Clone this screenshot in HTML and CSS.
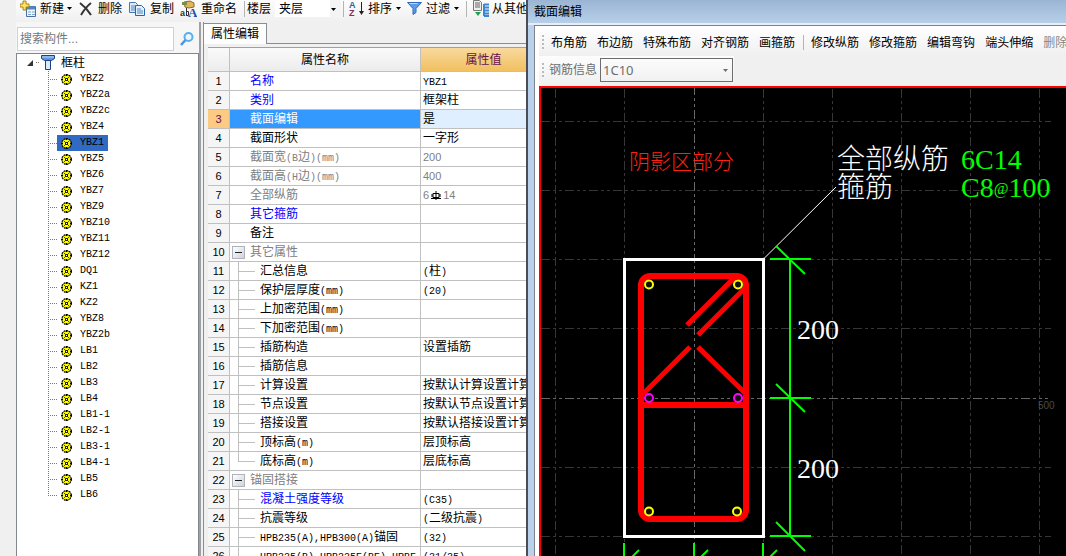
FILE: index.html
```html
<!DOCTYPE html>
<html lang="zh-CN">
<head>
<meta charset="utf-8">
<title>截面编辑</title>
<link rel="stylesheet" href="styles.css">
</head>
<body>
<svg class="defs" aria-hidden="true">
  <symbol id="gear" viewBox="0 0 11 11">
    <circle cx="5.5" cy="5.5" r="4.9" fill="#444" stroke="#000" stroke-width="1.1" stroke-dasharray="1.6 1.2"/>
    <circle cx="5.5" cy="5.5" r="4" fill="#ff0"/>
    <path d="M5.500 0v2M5.500 9v2M0 5.500h2M9 5.500h2" stroke="#000"/>
    <path d="M3 3l1 1M8 3L7 4M3 8l1-1M8 8L7 7" stroke="#444" stroke-width="1"/>
    <rect x="4.500" y="4.500" width="2" height="2" fill="#fff" stroke="#222" stroke-width="1"/>
  </symbol>
  <symbol id="caret" viewBox="0 0 5 3"><path d="M0 0h5L2.5 3z" fill="currentColor"/></symbol>
</svg>
<div class="app">
  <main class="main">
    <div class="toolbar" role="toolbar" aria-label="构件">
      <button class="tool new"><svg width="17" height="18" viewBox="0 0 17 18"><path d="M6.500 6.500h9v10h-9z" fill="#eef5fc" stroke="#4a7099"/><path d="M7 8h8" stroke="#4f86c6" stroke-width="3"/><path d="M8 12h3M12 12h3M8 14.500h3M12 14.500h3" stroke="#7aa5d6"/><path d="M3 1h3v3h3v3H6v3H3V7H0V4h3z" fill="#ffe45c" stroke="#a8841c"/></svg><span>新建</span><svg class="caret" width="5" height="3"><use href="#caret"/></svg></button>
      <button class="tool del"><svg width="14" height="14" viewBox="0 0 14 14"><path d="M1 1c4 3 8 7 11 12M12 1C8 4 5 8 2 13" fill="none" stroke="#333" stroke-width="2"/></svg><span>删除</span></button>
      <button class="tool copy"><svg width="16" height="14" viewBox="0 0 16 14"><path d="M.5.500h6l2 2v8h-8z" fill="#dcebfa" stroke="#4878b0"/><path d="M2 4h4M2 6h4M2 8h4" stroke="#4f86c6"/><path d="M6.500 3.500h6l3 3v7h-9z" fill="#e5f1fd" stroke="#2f62a8"/><path d="M8 7h4M8 9h6M8 11h6" stroke="#4f86c6"/></svg><span>复制</span></button>
      <button class="tool ren"><svg width="17" height="18" viewBox="0 0 17 18"><path d="M4 2l6-1 4 2v4l-5 1-4-1z" fill="#e1b65b" stroke="#8c6a2b"/><path d="M2 2h5v3H2z" fill="#7c8e4a"/><text x="0" y="16" class="ico-ab">a</text><path d="M6.500 8v8M6.500 11.500h2v4h-2" fill="none" stroke="#333"/><text x="8" y="17" class="ico-a">A</text></svg><span>重命名</span></button>
      <i class="sep"></i>
      <label class="floor-label" for="floor">楼层</label>
      <span class="pick floor"><select id="floor"><option>夹层</option></select><svg class="pick-arrow" width="5" height="3"><use href="#caret"/></svg></span>
      <i class="sep"></i>
      <button class="tool sort"><svg width="15" height="16" viewBox="0 0 15 16"><text x="0" y="7" class="ico-s blue">A</text><text x="0" y="15" class="ico-s red">Z</text><path d="M12.500 1v12" stroke="#222"/><path d="M10 10h5l-2.500 4z" fill="#222"/></svg><span>排序</span><svg class="caret" width="5" height="3"><use href="#caret"/></svg></button>
      <button class="tool filter"><svg width="15" height="13" viewBox="0 0 15 13"><path d="M.5.500h14L9 6.500v4L6 12.500v-6z" fill="#5c9bea" stroke="#2e68bd"/><path d="M2.500 1.500h8" stroke="#b9d7fb"/></svg><span>过滤</span><svg class="caret" width="5" height="3"><use href="#caret"/></svg></button>
      <i class="sep"></i>
      <button class="tool from"><svg width="17" height="17" viewBox="0 0 17 17"><path d="M1.500.500h6l2 2v8h-8z" fill="#eee" stroke="#777"/><path d="M3 3h5M3 5h5M3 7h5" stroke="#666"/><path d="M3 12h6l-3 4z" fill="#19a34b"/><path d="M12 4v12M12 4.500h5M12 7.500h5M12 10.500h5M12 13.500h5M12 16h5" stroke="#3f86d0" stroke-width="2"/></svg><span>从其他</span></button>
    </div>
    <div class="panes">
      <section class="tree-pane">
        <div class="search">
          <input type="text" placeholder="搜索构件..." aria-label="搜索构件">
          <button class="find" aria-label="搜索"><svg width="14" height="14" viewBox="0 0 14 14"><circle cx="8.500" cy="5" r="4" fill="#e8f6ff" stroke="#5aafe8" stroke-width="2"/><path d="M5.500 8L1 13" stroke="#4a93dd" stroke-width="2.500"/></svg></button>
        </div>
        <div class="tree">
          <div class="root"><svg class="exp" width="6" height="6" viewBox="0 0 6 6"><path d="M6 0v6H0z" fill="#333"/></svg><i class="dots"></i><svg width="14" height="15" viewBox="0 0 14 15"><path d="M.5.500h13v3l-3 2h-7l-3-2z" fill="#5b93dd" stroke="#1d3f85"/><path d="M1 2h12" stroke="#bcdcff"/><path d="M4.500 5.500h5v9h-5z" fill="#d7ebff" stroke="#1d3f85"/></svg><span>框柱</span></div>
          <ul>
            <li><i></i><span><svg><use href="#gear"/></svg>YBZ2</span></li>
            <li><i></i><span><svg><use href="#gear"/></svg>YBZ2a</span></li>
            <li><i></i><span><svg><use href="#gear"/></svg>YBZ2c</span></li>
            <li><i></i><span><svg><use href="#gear"/></svg>YBZ4</span></li>
            <li><i></i><span class="on"><svg><use href="#gear"/></svg>YBZ1</span></li>
            <li><i></i><span><svg><use href="#gear"/></svg>YBZ5</span></li>
            <li><i></i><span><svg><use href="#gear"/></svg>YBZ6</span></li>
            <li><i></i><span><svg><use href="#gear"/></svg>YBZ7</span></li>
            <li><i></i><span><svg><use href="#gear"/></svg>YBZ9</span></li>
            <li><i></i><span><svg><use href="#gear"/></svg>YBZ10</span></li>
            <li><i></i><span><svg><use href="#gear"/></svg>YBZ11</span></li>
            <li><i></i><span><svg><use href="#gear"/></svg>YBZ12</span></li>
            <li><i></i><span><svg><use href="#gear"/></svg>DQ1</span></li>
            <li><i></i><span><svg><use href="#gear"/></svg>KZ1</span></li>
            <li><i></i><span><svg><use href="#gear"/></svg>KZ2</span></li>
            <li><i></i><span><svg><use href="#gear"/></svg>YBZ8</span></li>
            <li><i></i><span><svg><use href="#gear"/></svg>YBZ2b</span></li>
            <li><i></i><span><svg><use href="#gear"/></svg>LB1</span></li>
            <li><i></i><span><svg><use href="#gear"/></svg>LB2</span></li>
            <li><i></i><span><svg><use href="#gear"/></svg>LB3</span></li>
            <li><i></i><span><svg><use href="#gear"/></svg>LB4</span></li>
            <li><i></i><span><svg><use href="#gear"/></svg>LB1-1</span></li>
            <li><i></i><span><svg><use href="#gear"/></svg>LB2-1</span></li>
            <li><i></i><span><svg><use href="#gear"/></svg>LB3-1</span></li>
            <li><i></i><span><svg><use href="#gear"/></svg>LB4-1</span></li>
            <li><i></i><span><svg><use href="#gear"/></svg>LB5</span></li>
            <li><i></i><span><svg><use href="#gear"/></svg>LB6</span></li>
          </ul>
        </div>
      </section>
      <section class="props">
        <div class="tabs"><button class="tab">属性编辑</button><i></i></div>
        <div class="grid">
          <table>
            <colgroup><col class="c-num"><col class="c-name"><col class="c-val"></colgroup>
            <thead><tr><th></th><th>属性名称</th><th class="hot">属性值</th></tr></thead>
            <tbody>
              <tr><th>1</th><td class="blue">名称</td><td><b>YBZ1</b></td></tr>
              <tr><th>2</th><td class="blue">类别</td><td>框架柱</td></tr>
              <tr class="sel"><th>3</th><td>截面编辑</td><td>是</td></tr>
              <tr><th>4</th><td>截面形状</td><td>一字形</td></tr>
              <tr class="gray"><th>5</th><td>截面宽<b>(B</b>边<b>)(mm)</b></td><td class="num">200</td></tr>
              <tr class="gray"><th>6</th><td>截面高<b>(H</b>边<b>)(mm)</b></td><td class="num">400</td></tr>
              <tr class="gray"><th>7</th><td>全部纵筋</td><td class="num">6<svg class="bar" width="10" height="9" viewBox="0 0 10 9"><path d="M5 0v9M0 7.500h10M2 2.500h6v4H2zM1 3v3M9 3v3" fill="none" stroke="#000"/></svg>14</td></tr>
              <tr><th>8</th><td class="blue">其它箍筋</td><td></td></tr>
              <tr><th>9</th><td>备注</td><td></td></tr>
              <tr class="group"><th>10</th><td><button class="fold" aria-label="收起"></button>其它属性</td><td></td></tr>
              <tr class="kid"><th>11</th><td>汇总信息</td><td><b>(</b>柱<b>)</b></td></tr>
              <tr class="kid"><th>12</th><td>保护层厚度<b>(mm)</b></td><td><b>(20)</b></td></tr>
              <tr class="kid"><th>13</th><td>上加密范围<b>(mm)</b></td><td></td></tr>
              <tr class="kid"><th>14</th><td>下加密范围<b>(mm)</b></td><td></td></tr>
              <tr class="kid"><th>15</th><td>插筋构造</td><td>设置插筋</td></tr>
              <tr class="kid"><th>16</th><td>插筋信息</td><td></td></tr>
              <tr class="kid"><th>17</th><td>计算设置</td><td>按默认计算设置计算</td></tr>
              <tr class="kid"><th>18</th><td>节点设置</td><td>按默认节点设置计算</td></tr>
              <tr class="kid"><th>19</th><td>搭接设置</td><td>按默认搭接设置计算</td></tr>
              <tr class="kid"><th>20</th><td>顶标高<b>(m)</b></td><td>层顶标高</td></tr>
              <tr class="kid end"><th>21</th><td>底标高<b>(m)</b></td><td>层底标高</td></tr>
              <tr class="group"><th>22</th><td><button class="fold" aria-label="收起"></button>锚固搭接</td><td></td></tr>
              <tr class="kid"><th>23</th><td class="blue">混凝土强度等级</td><td><b>(C35)</b></td></tr>
              <tr class="kid"><th>24</th><td>抗震等级</td><td><b>(</b>二级抗震<b>)</b></td></tr>
              <tr class="kid"><th>25</th><td><b>HPB235(A),HPB300(A)</b>锚固</td><td><b>(32)</b></td></tr>
              <tr class="kid"><th>26</th><td><b>HRB335(B),HRB335E(BE),HRBF</b></td><td><b>(31/35)</b></td></tr>
            </tbody>
          </table>
        </div>
      </section>
    </div>
  </main>

  <section class="window">
    <h1>截面编辑</h1>
    <div class="window-body">
      <div class="bars">
        <div class="bar-row">
          <i class="grip"></i>
          <button>布角筋</button><button>布边筋</button><button>特殊布筋</button><button>对齐钢筋</button><button>画箍筋</button>
          <i class="split"></i>
          <button>修改纵筋</button><button>修改箍筋</button><button>编辑弯钩</button><button>端头伸缩</button><button disabled>删除</button>
        </div>
        <div class="bar-row second">
          <i class="grip"></i>
          <label for="rebar">钢筋信息</label>
          <span class="pick rebar"><select id="rebar"><option>1C10</option></select><svg class="pick-arrow" width="5" height="3"><use href="#caret"/></svg></span>
        </div>
      </div>
      <svg class="cad" role="img" aria-label="柱截面">
        <g transform="translate(-541 -88)">
          <g class="guide">
            <path d="M555.500 89v467M624.500 89v467M763.500 89v467M832.500 89v467M901.500 89v467M970.500 89v467M1039.500 89v467"/>
            <path d="M541 121.500h510M541 190.500h510M541 259.500h510M541 328.500h510M541 467.500h510M541 536.500h510"/>
            <path class="axis" d="M694.500 86v470M541 398.500h507"/>
          </g>
          <text class="t-axis" x="1038" y="409">500</text>
          <rect class="concrete" x="624.500" y="259.500" width="139" height="277"/>
          <path class="leader" d="M764 258.500L836 187"/>
          <g class="stirrup">
            <rect x="641" y="276" width="105" height="243" rx="9"/>
            <path d="M641 405h105"/>
            <path class="hook" d="M736 276L687 325M746 287L698 335M690 347l-47 47M698 347l48 47"/>
          </g>
          <g class="rebar-dot">
            <circle cx="649" cy="284.500" r="4"/><circle cx="738" cy="284.500" r="4"/>
            <circle cx="649" cy="511.500" r="4"/><circle cx="737" cy="511.500" r="4"/>
            <circle class="mid" cx="649" cy="398" r="4"/><circle class="mid" cx="738" cy="398" r="4"/>
          </g>
          <path class="dim" d="M790 259v277M770 259h41M770 398h41M770 536h41M776 246l29 28M776 384l29 28M776 522l29 29M624 543v30M694 543v30M763 543v30M639 550l-29 29M708 550l-29 29M777 550l-29 29"/>
          <text class="t-note" x="629" y="169">阴影区部分</text>
          <text class="t-big" x="837" y="169">全部纵筋</text>
          <text class="t-big" x="837" y="197">箍筋</text>
          <text class="t-green" x="961" y="169">6C14</text>
          <text class="t-green" x="961" y="197">C8<tspan class="at" dy="-3">@</tspan><tspan dy="3">100</tspan></text>
          <text class="t-dim" x="797" y="339">200</text>
          <text class="t-dim" x="797" y="478">200</text>
        </g>
      </svg>
    </div>
  </section>
</div>
</body>
</html>
```
FILE: styles.css
```css
* { box-sizing: border-box; }
body {
  margin: 0;
  background: #f0f0f0;
  color: #000;
  font: 12px/16px "Liberation Sans", "Noto Sans CJK SC", sans-serif;
}
button, input, select { margin: 0; padding: 0; border: 0; background: none; color: inherit; font: inherit; }
svg { display: block; flex: none; }
.defs { position: absolute; width: 0; height: 0; }
.app {
  display: grid;
  grid-template-columns: minmax(0, 528fr) minmax(0, 538fr);
  height: 100vh;
  overflow: hidden;
}

/* main window */
.main { display: flex; flex-direction: column; min-width: 0; min-height: 0; padding-left: 16px; border-right: 2px solid #4a4d55; overflow: hidden; }
.toolbar {
  display: flex;
  flex: none;
  align-items: center;
  height: 22px;
  padding: 0 0 5px 4px;
  background: linear-gradient(#fcfcfc, #f0f0f0);
  white-space: nowrap;
}
.tool { display: flex; flex: none; align-items: center; gap: 3px; }
.tool.new, .tool.del, .tool.ren { margin-right: 7px; }
.tool.copy { margin-right: 6px; }
.tool.copy, .tool.del { gap: 5px; }
.tool.ren { gap: 4px; }
.tool.sort { margin: 0 6px 0 5px; gap: 4px; }
.tool.filter { margin-right: 7px; gap: 4px; }
.tool.from { margin-left: 5px; }
.sep { flex: none; width: 1px; height: 16px; background: #b4b4b4; }
.floor-label { margin: 0 4px 0 2px; flex: none; }
.pick { position: relative; display: block; flex: none; }
.pick select { display: block; width: 100%; height: 100%; appearance: none; }
.pick-arrow { position: absolute; right: 4px; top: calc(50% - 1px); pointer-events: none; }
.floor { width: 66px; height: 17px; margin-right: 2px; background: #fff; border-right: 11px solid #f4f4f4; }
.floor .pick-arrow { right: -6px; }
.floor select { padding-left: 4px; }
.ico-ab { font: bold 9px "Liberation Sans", sans-serif; fill: #333; }
.ico-a { font: bold 13px "Liberation Serif", serif; fill: #1b4fb0; }
.ico-s { font: bold 9px "Liberation Sans", sans-serif; }
.ico-s.blue { fill: #2e62a8; }
.ico-s.red { fill: #8c2f46; }

.panes { display: flex; flex: 1; min-height: 0; }
.tree-pane { display: flex; flex: 0 0 185px; flex-direction: column; border-right: 2px solid #a0a0a0; }
.search { display: flex; flex: none; align-items: center; gap: 6px; height: 31px; padding: 3px 0 0 1px; background: #f6f6f6; }
.search input { width: 157px; height: 24px; padding: 0 2px; border: 1px solid #d0d0d8; background: #fff; }
.search input::placeholder { color: #777; opacity: 1; }
.tree { flex: 1; min-height: 0; overflow: hidden; border: solid #828790; border-width: 1px 1px 0; background: #fff; }
.root { display: flex; align-items: center; height: 17px; padding-left: 10px; }
.root .dots { width: 4px; height: 1px; margin: 0 1px 0 3px; }
.root span { margin-left: 6px; }
.root .dots, .tree li i { background: repeating-linear-gradient(90deg, #777 0 1px, transparent 1px 2px); }
.tree ul { margin: 0 0 0 31px; padding: 0; list-style: none; font: 10px/16px "Liberation Mono", monospace; }
.tree li { display: flex; align-items: center; height: 16px; background: repeating-linear-gradient(#777 0 1px, transparent 1px 2px) 0 0 / 1px 100% no-repeat; }
.tree li:last-child { background-size: 1px 50%; }
.tree li i { flex: none; width: 9px; height: 1px; }
.tree li span { display: flex; align-items: center; gap: 8px; height: 16px; padding: 0 4px; }
.tree li .on { background: #316ac5; }
.tree li svg { width: 11px; height: 11px; }

.props { display: flex; flex: 1; flex-direction: column; min-width: 0; margin-left: 2px; border-left: 1px solid #8a8d95; }
.tabs { display: flex; flex: none; height: 22px; padding-top: 1px; }
.tab { flex: none; width: 63px; border: solid #8a8d95; border-width: 1px 1px 0 0; background: #fdfdfd; }
.tabs i { flex: 1; border-bottom: 1px solid #8a8d95; }
.grid { flex: 1; min-height: 0; margin: 3px 0 0 4px; border: solid #a0a0a0; border-width: 1px 0 0; overflow: hidden; background: #fff; }
table { width: 339px; border-collapse: separate; border-spacing: 0; table-layout: fixed; white-space: nowrap; }
.c-num { width: 22px; }
.c-name { width: 191px; }
.c-val { width: 126px; }
th, td { height: 19px; padding: 0; border: solid #c0c0c0; border-width: 0 1px 1px 0; line-height: 18px; text-align: left; overflow: hidden; }
thead th { height: 24px; background: linear-gradient(#fafafa, #ececec); font-weight: 400; text-align: center; }
thead .hot { background: linear-gradient(#f9d99f, #f1c05f); color: #6a1050; }
tbody th { background: #f5f5f5; font-size: 11px; font-weight: 400; text-align: center; }
td:nth-child(2) { padding-left: 20px; }
td:nth-child(3) { padding-left: 2px; }
td b { font: 10px/10px "Liberation Mono", monospace; }
td.num { font-size: 11px; }
td.blue { color: #00f; }
.gray td, .group td { color: #808080; }
.sel th { background: #fbcb84; color: #6a1050; }
.sel td { background: #e0efff; }
.sel td:nth-child(2) { background: #3399ff; color: #fff; }
.bar { display: inline-block; margin: 0 2px; vertical-align: -1px; }
.group td:nth-child(2) { padding-left: 2px; }
.fold {
  width: 13px; height: 13px; margin-right: 5px; border: 1px solid #b0b4ba; vertical-align: -2px;
  background: linear-gradient(#222, #222) center / 7px 1px no-repeat, linear-gradient(135deg, #fff, #cdd2dc);
}
.kid td:nth-child(2) {
  padding-left: 30px;
  background: linear-gradient(#c0c0c0, #c0c0c0) 8px 0 / 1px 100% no-repeat, linear-gradient(#c0c0c0, #c0c0c0) 8px 9px / 17px 1px no-repeat;
}
.kid.end td:nth-child(2) { background-size: 1px 10px, 17px 1px; }

/* section editor */
.window { display: flex; flex-direction: column; min-width: 0; min-height: 0; padding-left: 6px; background: #b9d1ea; overflow: hidden; }
h1 { flex: none; height: 25px; margin: 0 0 0 -6px; padding-left: 6px; border-bottom: 2px solid #e8eef5; background: linear-gradient(#9ab5d3, #b7cfe9); font-size: 12px; font-weight: 400; line-height: 25px; }
.window-body { display: flex; flex: 1; flex-direction: column; min-height: 0; padding: 3px 0 0 4px; border: solid #7d828c; border-width: 1px 0 0 1px; background: #fff; }
.bars { flex: none; height: 57px; background: #f0f0f0; overflow: hidden; }
.bar-row { display: flex; align-items: center; gap: 10px; height: 27px; padding-left: 3px; background: linear-gradient(#fdfdfd, #f0f0f0); white-space: nowrap; }
.bar-row button { flex: none; }
.bar-row button:disabled { color: #888; }
.grip { flex: none; width: 2px; height: 15px; margin-right: -3px; background: repeating-linear-gradient(#bbb 0 2px, transparent 2px 4px); }
.split { flex: none; width: 1px; height: 15px; margin: 0 -3px 0 -2px; background: #b4b4b4; }
.second { width: 195px; height: 28px; gap: 3px; color: #6d6d6d; }
.second .grip { margin-right: 2px; }
.rebar { width: 133px; height: 24px; border: 1px solid #6d6d6d; }
.rebar select { padding-left: 2px; font: 13px/20px "Noto Sans", sans-serif; }
.cad { flex: 1; width: 100%; min-height: 0; border: solid #f00; border-width: 2px 0 0 2px; background: #000; }
.guide path { fill: none; stroke: #363636; stroke-dasharray: 9 3 3 3 3 3; }
.guide .axis { stroke: #686868; }
.concrete { fill: none; stroke: #fff; stroke-width: 3; }
.leader { stroke: #fff; stroke-width: 1; }
.stirrup { fill: none; stroke: #f00; stroke-width: 6; }
.hook { stroke-width: 5; }
.rebar-dot { fill: #111; stroke: #ff0; stroke-width: 2; }
.rebar-dot .mid { stroke: #f0f; }
.dim { fill: none; stroke: #0f0; stroke-width: 2; }
.t-note { fill: #ff2010; font: 300 21px "Noto Sans CJK SC", sans-serif; }
.t-big { fill: #fff; font: 300 28px "Noto Sans CJK SC", sans-serif; }
.t-green, .t-dim { font: 28px "Liberation Serif", serif; }
.t-green { fill: #0f0; }
.t-green .at { font-size: 16px; }
.t-dim { fill: #fff; }
.t-axis { fill: #4a4a4a; font: 10px "Liberation Sans", sans-serif; }
```
